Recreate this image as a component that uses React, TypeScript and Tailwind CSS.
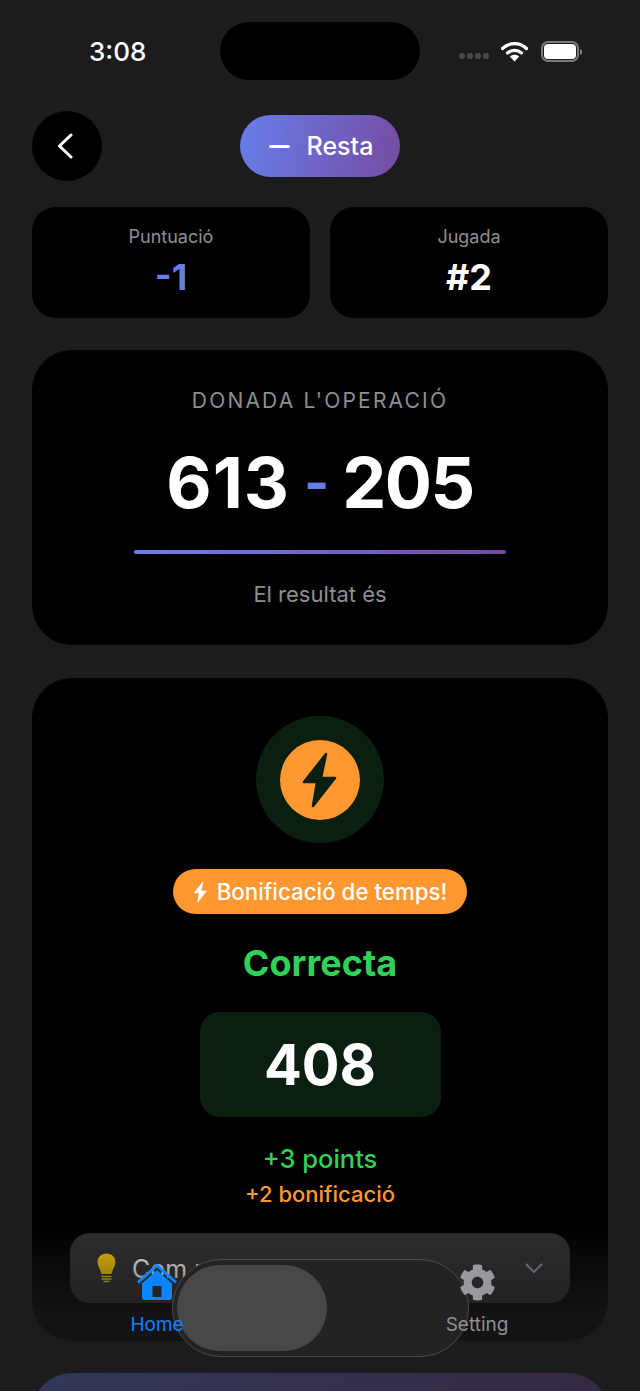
import React from "react";
import { FaCog } from "react-icons/fa";

const font = { fontFamily: "Inter, sans-serif" };

function Bolt({ width, height, color }: { width: number; height: number; color: string }) {
  return (
    <svg width={width} height={height} viewBox="21 10 38 58">
      <polygon points="46,13 24,41 37,41 33,65 55,37 41,37" fill={color} stroke={color} strokeWidth="2.500" strokeLinejoin="round" />
    </svg>
  );
}

function StatusBar() {
  return (
    <div className="h-[111px] shrink-0">
      <div className="grid h-[80px] grid-cols-[220px_200px_220px] items-start">
        <span className="ml-[89px] mt-[35px] text-[26px] leading-[34px] font-medium text-white">3:08</span>
        <div className="mt-[22px] h-[58px] rounded-full bg-black" />
        <div className="mr-[58px] mt-[41px] flex items-center justify-end">
          <div className="mr-[12px] mt-[9px] flex gap-[2px]">
            <span className="h-[6px] w-[6px] rounded-full bg-[#4a4a4c]" />
            <span className="h-[6px] w-[6px] rounded-full bg-[#4a4a4c]" />
            <span className="h-[6px] w-[6px] rounded-full bg-[#4a4a4c]" />
            <span className="h-[6px] w-[6px] rounded-full bg-[#4a4a4c]" />
          </div>
          <svg width="27" height="21" viewBox="0 0 27 21" className="mr-[13px]">
            <path d="M1.500 7.500C8.500 1 18.500 1 25.500 7.500" stroke="#fff" strokeWidth="3.200" fill="none" strokeLinecap="round" />
            <path d="M6.500 12C10.500 8.500 16.500 8.500 20.500 12" stroke="#fff" strokeWidth="3.200" fill="none" strokeLinecap="round" />
            <path d="M13.500 20.500L8.800 15.500C11.500 13 15.500 13 18.200 15.500Z" fill="#fff" />
          </svg>
          <div className="flex items-center">
            <div className="h-[21px] w-[38px] rounded-[7px] border-2 border-[#7b7b7d] p-[1px]">
              <div className="h-full w-full rounded-[4px] bg-white" />
            </div>
            <div className="ml-[1px] h-[6px] w-[2px] rounded-r-full bg-[#7b7b7d]" />
          </div>
        </div>
      </div>
    </div>
  );
}

function Header() {
  return (
    <div className="relative flex h-[70px] items-center justify-center px-[32px]">
      <div className="absolute left-[32px] top-0 flex h-[70px] w-[70px] items-center justify-center rounded-full bg-black pr-[5px]">
        <svg width="16" height="26" viewBox="0 0 16 26">
          <path d="M14 2L2.500 13L14 24" fill="none" stroke="#fff" strokeWidth="3" strokeLinecap="round" strokeLinejoin="round" />
        </svg>
      </div>
      <div className="flex h-[62px] w-[160px] items-center justify-center gap-[17px] rounded-full bg-[linear-gradient(100deg,#667eea,#764ba2)] pl-[2px]">
        <span className="h-[3px] w-[21px] rounded-full bg-white" />
        <span className="pt-[2px] text-[25px] font-medium text-white">Resta</span>
      </div>
    </div>
  );
}

function Stat({ label, value, color }: { label: string; value: string; color: string }) {
  return (
    <div className="flex h-[111px] flex-1 flex-col items-center rounded-[24px] bg-black pt-[19px]">
      <span className="text-[18px] leading-[22px] text-[#8e8e93]">{label}</span>
      <span className={`mt-[7px] text-[36px] leading-[44px] font-bold ${color}`}>{value}</span>
    </div>
  );
}

export default function App() {
  return (
    <div className="relative h-[1391px] w-[640px] overflow-hidden bg-[#1c1c1e]" style={font}>
      <StatusBar />
      <Header />
      <div className="mt-[26px] flex gap-[20px] px-[32px]">
        <Stat label="Puntuació" value="-1" color="text-[#667eea]" />
        <Stat label="Jugada" value="#2" color="text-white" />
      </div>

      <div className="mx-[32px] mt-[32px] flex h-[295px] flex-col items-center rounded-[40px] bg-black pt-[38px]">
        <span className="text-[21px] leading-[26px] tracking-[2.200px] text-[#8e8e93]">DONADA L'OPERACIÓ</span>
        <div className="mt-[29px] flex h-[80px] items-center text-[70px] leading-[80px] font-bold text-white">
          <span className="tracking-[1px]">613</span>
          <span className="ml-[14px] mr-[13px] text-[54px] leading-[80px] text-[#667eea]">-</span>
          <span className="tracking-[-1.500px]">205</span>
        </div>
        <div className="mt-[27px] h-[4px] w-[372px] rounded-full bg-gradient-to-r from-[#667eea] to-[#764ba2]" />
        <span className="mt-[27px] text-[22px] leading-[26px] text-[#8e8e93]">El resultat és</span>
      </div>

      <div className="mx-[32px] mt-[33px] flex h-[663px] flex-col items-center rounded-[40px] bg-black pt-[38px]">
        <div className="flex h-[127px] w-[128px] items-center justify-center rounded-full bg-[#0a1f10]">
          <div className="flex h-[80px] w-[80px] items-center justify-center rounded-full bg-[#ff9830]">
            <Bolt width={38} height={58} color="#0a1f10" />
          </div>
        </div>
        <div className="mt-[26px] flex h-[45px] w-[294px] items-center justify-center gap-[9px] rounded-full bg-[#ff9830]">
          <Bolt width={15} height={22} color="#ffffff" />
          <span className="text-[22.300px] font-medium text-white">Bonificació de temps!</span>
        </div>
        <span className="mt-[26px] text-[36px] leading-[46px] font-bold text-[#30d158]">Correcta</span>
        <div className="mt-[26px] flex h-[105px] w-[241px] items-center justify-center rounded-[20px] bg-[#0a1f10]">
          <span className="text-[56px] font-bold text-white">408</span>
        </div>
        <span className="mt-[26px] text-[25.500px] leading-[32px] font-medium text-[#30d158]">+3 points</span>
        <span className="mt-[5px] text-[22px] leading-[28px] font-medium text-[#ff9830]">+2 bonificació</span>
        <div className="mt-[25px] flex h-[70px] w-[500px] items-center rounded-[20px] bg-[#2e2e30] pl-[27px] pr-[27px]">
          <svg width="19" height="30" viewBox="0 0 19 30" className="shrink-0">
            <path d="M9.500 0.500C4.500 0.500 0.500 4 0.500 9C0.500 13 3.500 16 4.500 21H14.500C15.500 16 18.500 13 18.500 9C18.500 4 14.500 0.500 9.500 0.500Z" fill="#ffcc00" />
            <path d="M5 23.500H14M5 26H14M7 28.500H12" stroke="#ffcc00" strokeWidth="1.500" strokeLinecap="round" />
          </svg>
          <span className="ml-[16px] flex-1 pt-[3px] text-[25px] text-white">Com resoldre</span>
          <svg width="18" height="11" viewBox="0 0 18 11" className="shrink-0">
            <path d="M1.500 1.500L9 9L16.500 1.500" fill="none" stroke="#8e8e93" strokeWidth="2.200" strokeLinecap="round" strokeLinejoin="round" />
          </svg>
        </div>
      </div>

      <div className="mx-[32px] mt-[32px] h-[200px] rounded-[40px] bg-gradient-to-r from-[#667eea] to-[#764ba2]" />

      <div className="absolute inset-x-0 bottom-0 h-[170px] bg-[linear-gradient(to_bottom,#1c1c1e00_0%,#1c1c1e55_25%,#1c1c1eb0_55%,#1c1c1eb8_100%)]" />

      <div className="absolute left-[172px] top-[1259px] h-[98px] w-[297px] rounded-full border-[1.500px] border-[#4a4a4c] bg-[#232325]">
        <div className="ml-[4px] mt-[5px] h-[86px] w-[150px] rounded-full bg-[#484849]" />
      </div>

      <div className="absolute left-[127px] top-[1264px] flex w-[60px] flex-col items-center">
        <svg width="40" height="36" viewBox="0 0 40 36">
          <path d="M1 18.500L20 1.500L39 18.500" fill="none" stroke="#0a84ff" strokeWidth="3" />
          <path fillRule="evenodd" d="M20 6L35 19.500V33C35 35 34 36 32 36H8C6 36 5 35 5 33V19.500ZM15.500 22V33H24.500V22Z" fill="#0a84ff" />
        </svg>
        <span className="mt-[13px] text-[19px] leading-[24px] text-[#0a84ff]">Home</span>
      </div>
      <div className="absolute left-[437px] top-[1264px] flex w-[80px] flex-col items-center">
        <FaCog className="text-[#98989d]" size={37} />
        <span className="mt-[12px] text-[19px] leading-[24px] text-[#8e8e93]">Setting</span>
      </div>
    </div>
  );
}
